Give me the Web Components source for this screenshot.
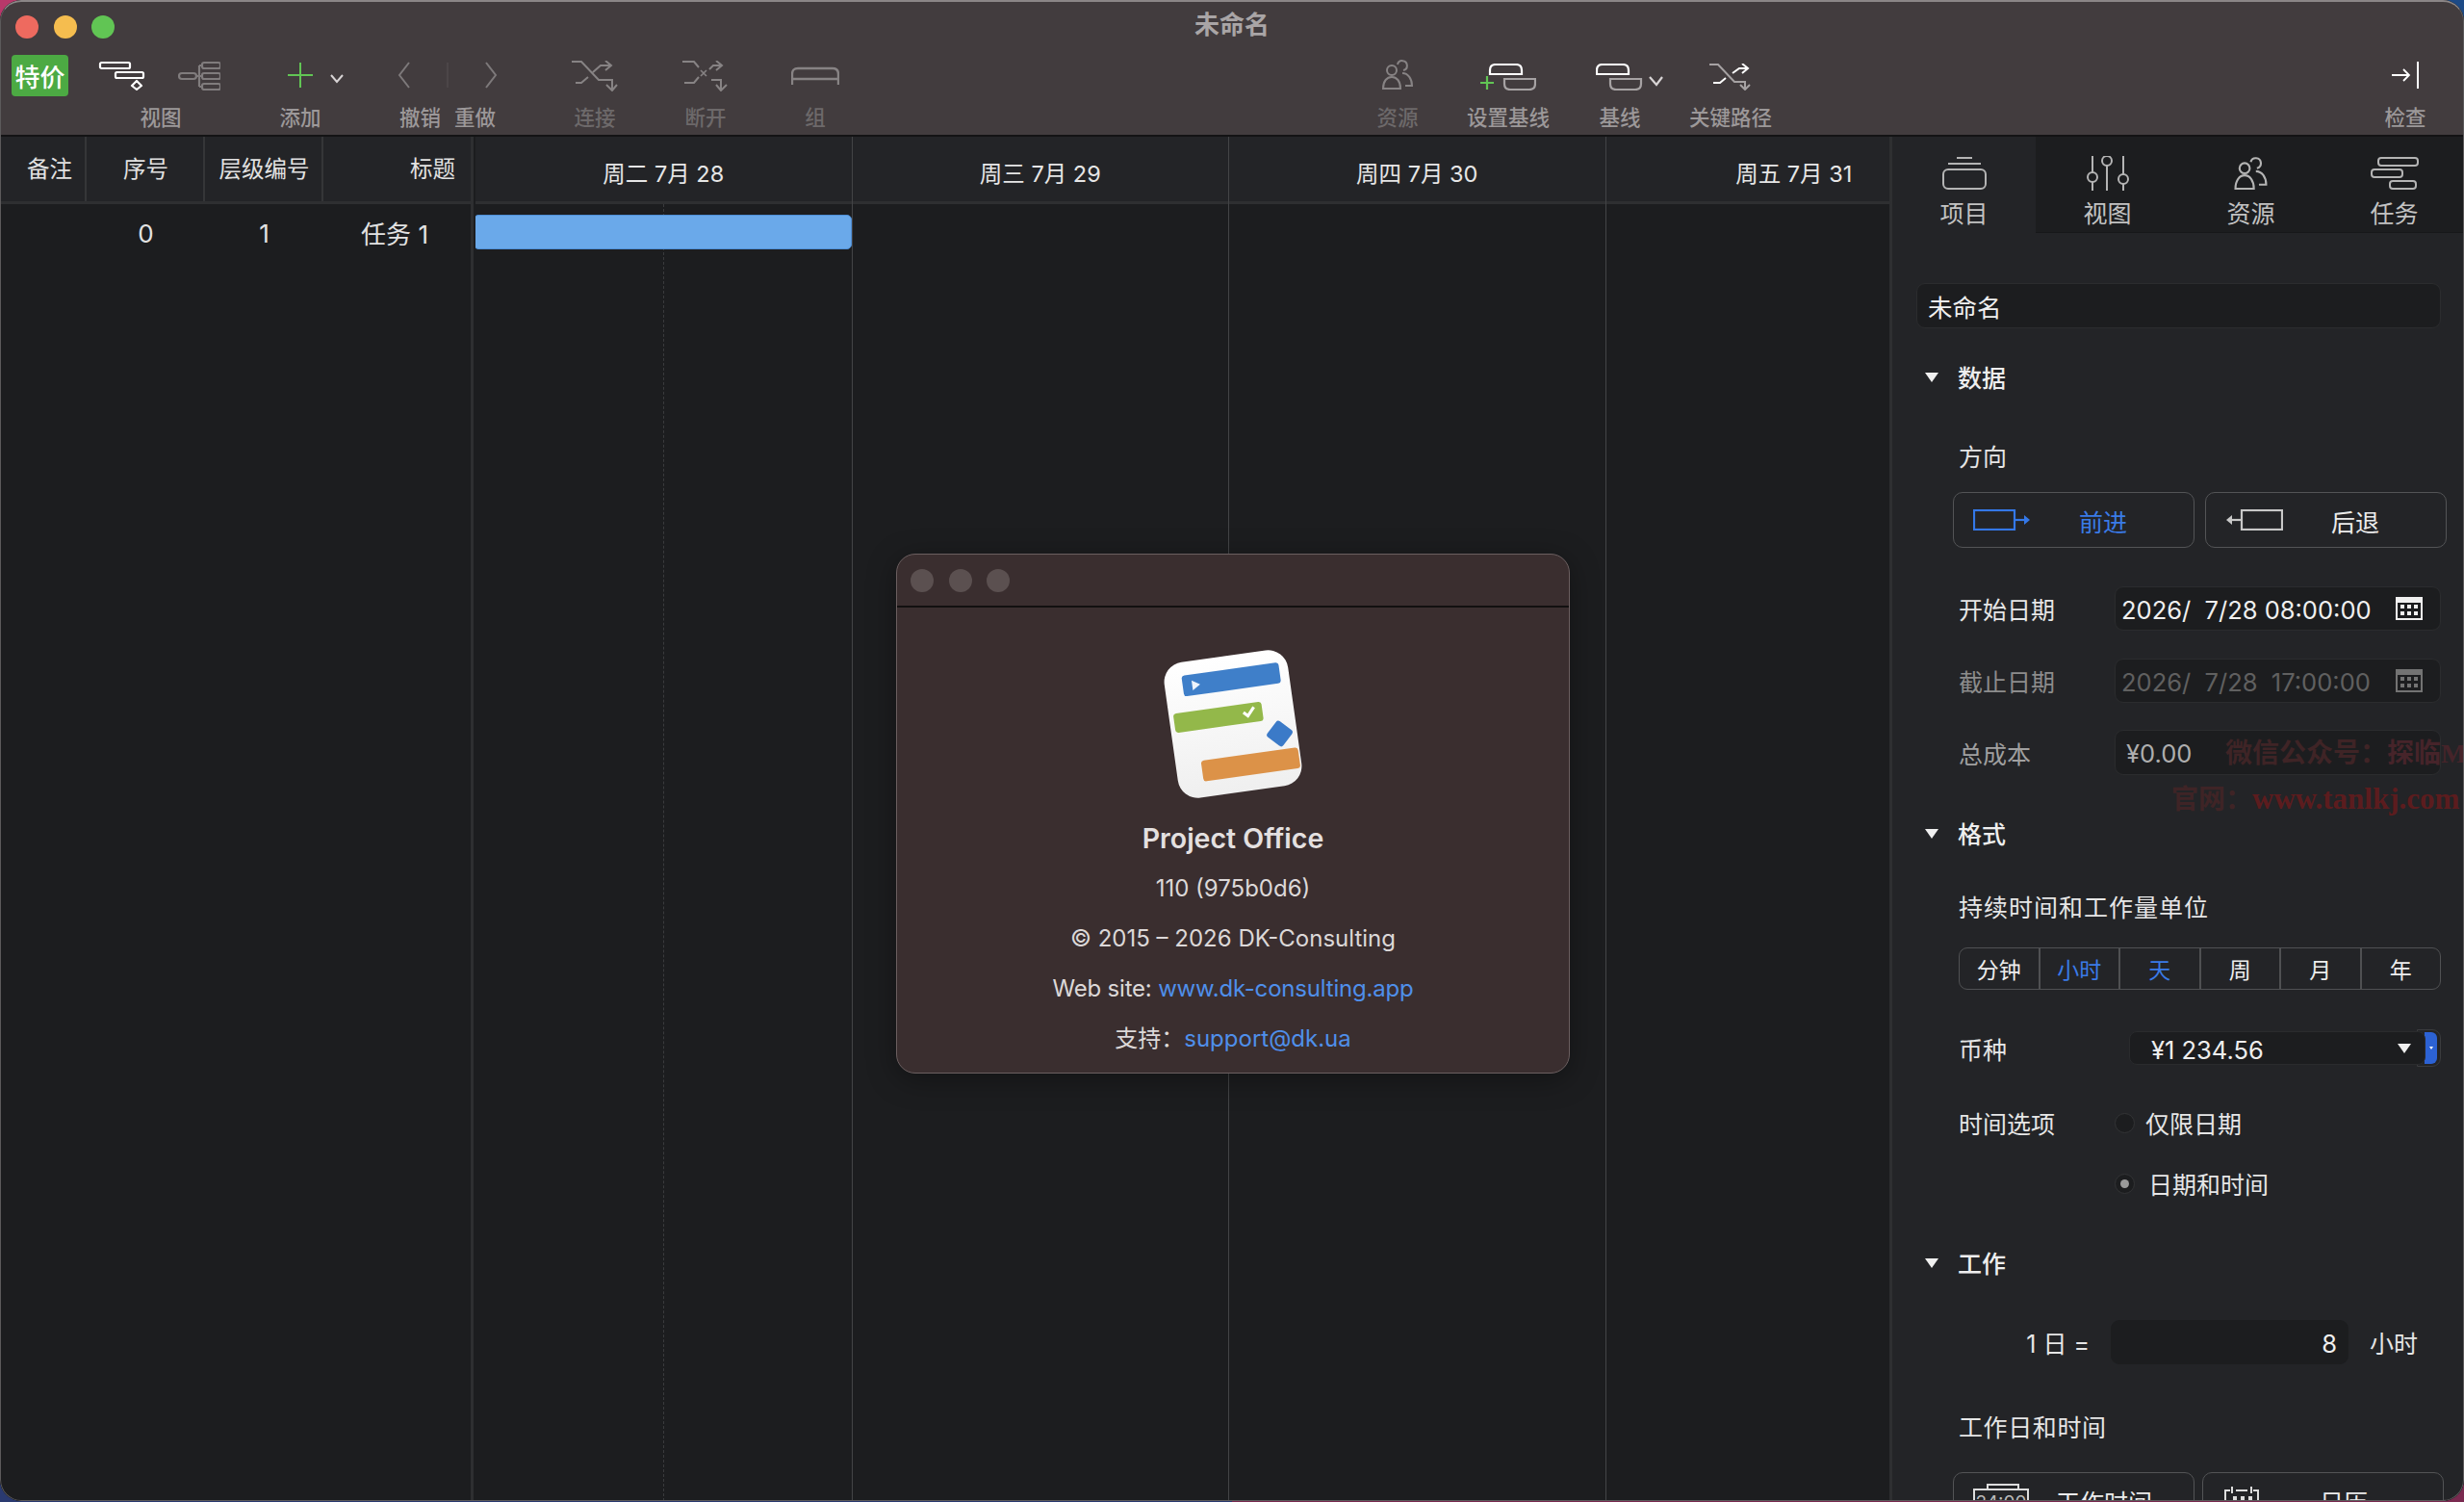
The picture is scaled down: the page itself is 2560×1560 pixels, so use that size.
<!DOCTYPE html>
<html lang="zh-CN">
<head>
<meta charset="utf-8">
<title>未命名</title>
<style>
html,body{margin:0;padding:0;height:1560px;overflow:hidden}
body{background:conic-gradient(#1d4a86 0 90deg,#7a2a50 90deg 180deg,#2a3a70 180deg 270deg,#b8386a 270deg 360deg);font-family:Inter,"Noto Sans CJK SC",sans-serif;}
</style>
</head>
<body>
<x-window>
  <x-titlebar>未命名</x-titlebar>
  <x-toolbar>
    <x-badge style="margin-left:12px">特价</x-badge>
    <x-tool style="width:130px;margin-left:31px">
      <svg style="margin-left:-4px" width="127" height="31" viewBox="0 0 127 31" fill="none" stroke-width="2.2" stroke-linejoin="round">
        <g stroke="#fff"><rect x="2" y="2" width="31" height="6" rx="1.5"/><rect x="18" y="12" width="29" height="6" rx="1.5"/><path d="M40 21l5 5-5 4-5-4z"/></g>
        <g stroke="#807c7d"><rect x="84" y="13" width="18" height="6" rx="3"/><rect x="108" y="2" width="19" height="6" rx="2"/><rect x="108" y="13" width="19" height="6" rx="2"/><rect x="108" y="24" width="19" height="6" rx="2"/><path d="M102 16h6M105 5v22M105 5h3M105 27h3"/></g>
      </svg>
      <span slot="label">视图</span>
    </x-tool>
    <x-tool style="width:100px;margin-left:30px">
      <svg style="margin-left:34px" width="62" height="30" viewBox="0 0 62 30" fill="none" stroke-width="2"><path d="M14 2v26M1 15h26" stroke="#61c554"/><path d="M46 15l6 7 6-7" stroke="#d8d4d5"/></svg>
      <span slot="label">添加</span>
    </x-tool>
    <x-tool style="width:116px;margin-left:45px">
      <svg width="104" height="32" viewBox="0 0 104 32" fill="none" stroke-width="2"><path d="M12 3L2 16l10 13" stroke="#7d797a"/><path d="M52 3v26" stroke="#565153" stroke-width="1"/><path d="M92 3l10 13-10 13" stroke="#7d797a"/></svg>
      <span slot="label" style="display:flex;gap:14px"><span>撤销</span><span>重做</span></span>
    </x-tool>
    <x-tool dim style="width:80px;margin-left:55px">
      <svg style="margin-top:2px" width="48" height="32" viewBox="0 0 48 32" fill="none" stroke="#878384" stroke-width="2"><path d="M0 1h10l18 19h14v10M36 25l6 6 5-6M4 23h6l7-6M22 12l8-7h10M35 0l6 5-6 5"/></svg>
      <span slot="label">连接</span>
    </x-tool>
    <x-tool dim style="width:80px;margin-left:35px">
      <svg style="margin-top:2px" width="48" height="32" viewBox="0 0 48 32" fill="none" stroke="#878384" stroke-width="2"><path d="M0 1h12l5 6M2 23h10l5-6M28 9l4-4h8M35 0l6 5-6 5M30 20h10v10M35 25l5 6 6-6"/><path d="M19 10l6 6m0-6l-6 6" stroke-width="1.6"/></svg>
      <span slot="label">断开</span>
    </x-tool>
    <x-tool dim style="width:80px;margin-left:34px">
      <svg style="margin-top:1px" width="50" height="20" viewBox="0 0 50 20" fill="none" stroke="#878384" stroke-width="2.4"><path d="M1 19V8Q1 2 7 2h36q6 0 6 6v11M1 13h48"/></svg>
      <span slot="label">组</span>
    </x-tool>
    <x-tool dim style="width:80px;margin-left:525px">
      <svg width="33" height="32" viewBox="0 0 33 32" fill="none" stroke="#878384" stroke-width="2"><circle cx="10" cy="11" r="5"/><path d="M1 30c0-8 4-12 9-12s9 4 9 12z"/><path d="M16 5a5 5 0 1 1 6 6"/><path d="M21 14c6 0 10 6 10 13h-7"/></svg>
      <span slot="label">资源</span>
    </x-tool>
    <x-tool style="width:100px;margin-left:25px">
      <svg style="margin-top:3px" width="58" height="28" viewBox="0 0 58 28" fill="none" stroke-width="2.2"><path d="M10 11V7q0-6 6-6h21q6 0 6 6v4z" stroke="#fff"/><path d="M25 16v5q0 6 6 6h20q6 0 6-6v-5z" stroke="#a6a2a3"/><path d="M7 13v14M0 20h14" stroke="#61c554"/></svg>
      <span slot="label">设置基线</span>
    </x-tool>
    <x-tool style="width:80px;margin-left:26px">
      <svg style="margin-left:20px;margin-top:3px" width="70" height="28" viewBox="0 0 70 28" fill="none" stroke-width="2.2"><path d="M1 11V7q0-6 6-6h21q6 0 6 6v4z" stroke="#fff"/><path d="M15 16v5q0 6 6 6h20q6 0 6-6v-5z" stroke="#a6a2a3"/><path d="M56 14l7 8 6-8" stroke="#d8d4d5"/></svg>
      <span slot="label">基线</span>
    </x-tool>
    <x-tool style="width:100px;margin-left:25px">
      <svg style="margin-top:3px" width="44" height="28" viewBox="0 0 44 28" fill="none" stroke-width="2"><path d="M0 1h9l17 18h11v8M32 22l5 5 5-5" stroke="#a6a2a3"/><path d="M4 20h7l6-5M24 10l7-5h8M34 0l6 5-6 5" stroke="#fff"/></svg>
      <span slot="label">关键路径</span>
    </x-tool>
    <x-tool style="width:80px;margin-left:611px">
      <svg width="30" height="30" viewBox="0 0 30 30" fill="none" stroke="#fff" stroke-width="2"><path d="M28 1v28"/><path d="M1 15h17M13 9l6 6-6 6" stroke-width="1.8"/></svg>
      <span slot="label">检查</span>
    </x-tool>
  </x-toolbar>
  <x-main>
    <x-gantt>
      <x-table>
        <x-th style="width:90px;padding-left:15px">备注</x-th>
        <x-th style="width:123px;padding-left:2px">序号</x-th>
        <x-th style="width:123px;padding-left:2px">层级编号</x-th>
        <x-th last style="width:153px;justify-content:flex-end;padding-right:16px">标题</x-th>
        <x-td slot="row" style="width:90px"></x-td>
        <x-td slot="row" style="width:123px">0</x-td>
        <x-td slot="row" style="width:123px">1</x-td>
        <x-td slot="row" style="width:153px;justify-content:flex-end;padding-right:44px;padding-bottom:2px">任务 1</x-td>
      </x-table>
      <x-timeline>
        <x-day>周二 7月 28<x-dash slot="bar"></x-dash><x-bar slot="bar"></x-bar></x-day>
        <x-day>周三 7月 29</x-day>
        <x-day>周四 7月 30</x-day>
        <x-day>周五 7月 31</x-day>
      </x-timeline>
    </x-gantt>
    <x-inspector>
      <x-tabs>
        <x-tab active>
          <svg width="46" height="34" viewBox="0 0 46 34" fill="none" stroke="#b4b4b4" stroke-width="2"><path d="M15 1h16M6 7h34"/><rect x="1" y="13" width="44" height="20" rx="5"/></svg>
          <span slot="label">项目</span>
        </x-tab>
        <x-tab>
          <svg width="44" height="36" viewBox="0 0 44 36" fill="none" stroke="#b4b4b4" stroke-width="2"><path d="M6 0v17M6 27v9M21 10v26M38 0v19M38 29v7"/><circle cx="6" cy="22" r="5"/><circle cx="21" cy="5" r="5"/><circle cx="38" cy="24" r="5"/></svg>
          <span slot="label">视图</span>
        </x-tab>
        <x-tab>
          <svg width="36" height="34" viewBox="0 0 33 32" fill="none" stroke="#b4b4b4" stroke-width="2"><circle cx="10" cy="11" r="5"/><path d="M1 31c0-8 4-13 9-13s9 5 9 13z"/><path d="M16 5a5 5 0 1 1 6 6"/><path d="M21 14c6 0 10 6 10 13h-7"/></svg>
          <span slot="label">资源</span>
        </x-tab>
        <x-tab>
          <svg width="50" height="34" viewBox="0 0 50 34" fill="none" stroke="#b4b4b4" stroke-width="2"><rect x="8" y="1" width="41" height="8" rx="3"/><rect x="1" y="13" width="32" height="8" rx="3"/><rect x="20" y="25" width="27" height="8" rx="3"/></svg>
          <span slot="label">任务</span>
        </x-tab>
      </x-tabs>
      <x-field style="margin:52px 0 0 25px;width:545px;height:47px;padding:0 0 0 11px">未命名</x-field>

      <x-section style="margin-top:35px">数据</x-section>
      <x-label style="margin-top:54px">方向</x-label>
      <x-pair style="margin-top:21px;--gap:11px">
        <x-btn active>
          <svg width="60" height="22" viewBox="0 0 60 22" fill="none" stroke="#3478e8" stroke-width="2.2"><rect x="1" y="1" width="42" height="20"/><path d="M43 11h11" /><path d="M53 6l6 5-6 5z" fill="#3478e8" stroke="none"/></svg>
          <span slot="text">前进</span>
        </x-btn>
        <x-btn>
          <svg width="60" height="22" viewBox="0 0 60 22" fill="none" stroke="#c8c8c8" stroke-width="2.2"><rect x="17" y="1" width="42" height="20"/><path d="M6 11h11"/><path d="M7 6l-6 5 6 5z" fill="#c8c8c8" stroke="none"/></svg>
          <span slot="text">后退</span>
        </x-btn>
      </x-pair>
      <x-row style="margin-top:40px"><span slot="label">开始日期</span>
        <x-field>2026/  7/28 08:00:00<x-cal slot="end"></x-cal></x-field>
      </x-row>
      <x-row dim style="margin-top:29px"><span slot="label">截止日期</span>
        <x-field disabled>2026/  7/28  17:00:00<x-cal slot="end" style="--c:#737373"></x-cal></x-field>
      </x-row>
      <x-row muted style="margin-top:28px"><span slot="label">总成本</span>
        <x-field style="padding-left:11px;color:#aeaeae;height:47px">¥0.00</x-field>
      </x-row>

      <x-section style="margin-top:45px">格式</x-section>
      <x-label style="margin-top:48px;letter-spacing:1px">持续时间和工作量单位</x-label>
      <x-seg style="margin-top:26px">
        <x-seg-item>分钟</x-seg-item><x-seg-item on>小时</x-seg-item><x-seg-item on>天</x-seg-item><x-seg-item>周</x-seg-item><x-seg-item>月</x-seg-item><x-seg-item last>年</x-seg-item>
      </x-seg>
      <x-row style="margin-top:41px;height:39px"><span slot="label">币种</span>
        <x-select>¥1 234.56</x-select>
      </x-row>
      <x-row style="margin-top:40px;height:30px"><span slot="label">时间选项</span>
        <x-radio style="--pad:11px">仅限日期</x-radio>
      </x-row>
      <x-row style="margin-top:33px;height:30px"><span slot="label"></span>
        <x-radio checked style="--pad:14px">日期和时间</x-radio>
      </x-row>

      <x-section style="margin-top:55px">工作</x-section>
      <x-workday style="margin-top:45px">
        <span slot="before">1 日 =</span>
        <x-field right style="width:247px;padding-right:11px;border-color:transparent">8</x-field>
        <span slot="after">小时</span>
      </x-workday>
      <x-label style="margin-top:51px;letter-spacing:.6px">工作日和时间</x-label>
      <x-pair style="margin-top:31px;--gap:8px">
        <x-btn style="--tx:28px">
          <x-clock>24:00</x-clock>
          <span slot="text">工作时间</span>
        </x-btn>
        <x-btn style="--il:22px;--tx:63px">
          <svg width="36" height="30" viewBox="0 0 36 30" fill="none" stroke="#ddd" stroke-width="2"><path d="M1 30V5h5M12 5h12M30 5h5v25"/><path d="M8 1v7M28 1v7"/><path d="M9 13h4M17 13h4M25 13h4" stroke-width="4"/></svg>
          <span slot="text">日历</span>
        </x-btn>
      </x-pair>
    </x-inspector>
  </x-main>
  <x-about></x-about>
  <x-watermark></x-watermark>
</x-window>

<script>
const def=(name,html)=>customElements.define(name,class extends HTMLElement{
  constructor(){super();this.attachShadow({mode:'open'}).innerHTML=html;}
});
const FONT='font-family:Inter,"Noto Sans CJK SC",sans-serif;';

def('x-window',`<style>
:host{display:flex;flex-direction:column;position:relative;width:2560px;height:1559px;border-radius:22px;overflow:hidden;background:#1c1d1f;color:#e6e6e6;${FONT}}
.edge{position:absolute;inset:0;border-radius:22px;border:1.5px solid #5c5a5b;border-top:2px solid #8b8687;pointer-events:none;z-index:9}
</style><slot></slot><div class="edge"></div>`);

def('x-titlebar',`<style>
:host{display:grid;grid-template-columns:1fr auto 1fr;height:48px;background:#423c3e;box-sizing:border-box;padding:14px 0 0 0;color:#a9a5a6;font-size:26px;font-weight:600;line-height:24px}
.lights{display:flex;gap:15.5px;margin:2px 0 0 16px}
i{width:24px;height:24px;border-radius:50%;display:block}
</style><div class="lights"><i style="background:#ee6a5f"></i><i style="background:#f5bd4f"></i><i style="background:#61c554"></i></div><div><slot></slot></div><div></div>`);

def('x-toolbar',`<style>
:host{display:flex;align-items:flex-start;height:94px;box-sizing:border-box;background:#423c3e;border-bottom:2px solid #131314}
</style><slot></slot>`);

def('x-badge',`<style>
:host{display:flex;align-items:center;justify-content:center;flex:none;width:59px;height:43px;margin-top:9px;border-radius:4px;background:#4caa43;color:#fff;font-size:26px;font-weight:500;white-space:nowrap}
</style><slot></slot>`);

def('x-tool',`<style>
:host{display:flex;flex-direction:column;align-items:center;flex:none;color:#9c9899;font-size:21.5px;font-weight:500}
:host([dim]){color:#6d696a}
.i{height:60px;display:flex;align-items:center;justify-content:center}
.l{height:28px;line-height:28px;white-space:nowrap}
::slotted(svg){display:block}
</style><div class="i"><slot></slot></div><div class="l"><slot name="label"></slot></div>`);

def('x-main',`<style>
:host{display:flex;flex:1;min-height:0}
</style><slot></slot>`);

def('x-gantt',`<style>
:host{display:flex;width:1963px;flex:none;overflow:hidden;background:#1c1d1f}
</style><slot></slot>`);

def('x-table',`<style>
:host{display:flex;flex-direction:column;flex:none;width:492px;box-sizing:border-box;border-right:3px solid #2e2f31}
.h{display:flex;height:70px;flex:none;background:#232427;border-bottom:3px solid #2e2f31;box-sizing:border-box}
.r{display:flex;height:60px}
</style><div class="h"><slot></slot></div><div class="r"><slot name="row"></slot></div>`);

def('x-th',`<style>
:host{display:flex;align-items:center;justify-content:center;box-sizing:border-box;border-right:2px solid #353638;color:#e2e2e2;font-size:23.5px;padding-bottom:3px;white-space:nowrap;flex:none}
:host([last]){border-right:0}
</style><slot></slot>`);

def('x-td',`<style>
:host{display:flex;align-items:center;justify-content:center;box-sizing:border-box;color:#e2e2e2;font-size:26px;flex:none;white-space:nowrap}
</style><slot></slot>`);

def('x-timeline',`<style>
:host{display:grid;grid-template-columns:repeat(4,391.5px);flex:none;margin-left:2px;overflow:hidden}
</style><slot></slot>`);

def('x-day',`<style>
:host{display:flex;flex-direction:column;position:relative;box-sizing:border-box;border-right:1px solid #434446}
.h{height:70px;box-sizing:border-box;background:#232427;border-bottom:3px solid #2e2f31;display:flex;align-items:center;justify-content:center;font-size:23.5px;color:#e6e6e6;white-space:nowrap;padding-top:6px}
.b{flex:1;padding-top:11px}
</style><div class="h"><slot></slot></div><div class="b"><slot name="bar"></slot></div>`);

def('x-bar',`<style>
:host{display:block;position:relative;z-index:1;height:36px;margin:0 0 0 -2px;box-sizing:border-box;background:#6aa9ea;border:1.5px solid #4f90d8;border-radius:5px}
</style>`);

def('x-dash',`<style>
:host{display:block;position:absolute;left:195px;top:70px;bottom:0;width:0;border-left:1px dashed #3a3b3d}
</style>`);

def('x-inspector',`<style>
:host{display:block;position:relative;flex:1;min-width:0;box-sizing:border-box;background:#232427;border-left:3px solid #2e2f31;overflow:hidden;color:#e6e6e6;font-size:25px}
</style><slot></slot>`);

def('x-tabs',`<style>
:host{display:flex;height:100px;background:#1c1d1f;box-sizing:border-box;border-bottom:1px solid #17181a}
</style><slot></slot>`);

def('x-tab',`<style>
:host{display:flex;flex-direction:column;align-items:center;flex:none;width:149px;color:#c2c2c2;font-size:25px;box-sizing:border-box}
:host([active]){background:#232427;height:101px}
.i{height:62px;display:flex;align-items:center;justify-content:center;padding-top:14px;box-sizing:border-box}
.l{line-height:32px;margin-top:2px}
::slotted(svg){display:block}
</style><div class="i"><slot></slot></div><div class="l"><slot name="label"></slot></div>`);

def('x-field',`<style>
:host{display:flex;align-items:center;box-sizing:border-box;height:46px;background:#1c1d1f;border:1.5px solid #2b2c2e;border-radius:9px;padding:2px 18px 0 6px;font-size:25.5px;color:#f0f0f0;white-space:pre}
:host([disabled]){color:#606060}
:host([right]){justify-content:flex-end}
.end{margin-left:auto;display:flex;margin-top:-2px}
:host([right]) .end{display:none}
</style><slot></slot><span class="end"><slot name="end"></slot></span>`);

def('x-cal',`<style>
:host{display:block;width:28px;height:24px;box-sizing:border-box;border:2px solid var(--c,#f0f0f0);border-top-width:6px;position:relative}
i{position:absolute;width:4px;height:4px;background:var(--c,#f0f0f0)}
</style><i style="left:3px;top:2px"></i><i style="left:10px;top:2px"></i><i style="left:17px;top:2px"></i><i style="left:3px;top:9px"></i><i style="left:10px;top:9px"></i><i style="left:17px;top:9px"></i>`);

def('x-section',`<style>
:host{display:flex;align-items:center;height:30px;margin-left:34px;font-size:25px;font-weight:500;color:#eee}
.t{width:0;height:0;border-left:7.5px solid transparent;border-right:7.5px solid transparent;border-top:10px solid #f0f0f0;margin-right:20px;flex:none;transform:translateY(1px)}
</style><span class="t"></span><slot></slot>`);

def('x-label',`<style>
:host{display:block;height:30px;line-height:30px;margin-left:69px;font-size:25px;color:#e6e6e6;white-space:nowrap}
</style><slot></slot>`);

def('x-pair',`<style>
:host{display:flex;gap:var(--gap,11px);margin-left:63px}
</style><slot></slot>`);

def('x-btn',`<style>
:host{display:flex;align-items:center;box-sizing:border-box;width:251px;height:58px;flex:none;border:1.5px solid #535456;border-radius:10px;color:#ececec;font-size:25px;white-space:nowrap;padding-left:var(--il,20px)}
:host([active]){color:#3a7be8}
.t{margin-left:var(--tx,50px);line-height:30px;padding-top:5px}
::slotted(svg){display:block;flex:none}
</style><slot></slot><span class="t"><slot name="text"></slot></span>`);

def('x-clock',`<style>
:host{display:block;position:relative;width:58px;height:30px;margin-top:5px;box-sizing:border-box;border:2px solid #ddd;flex:none;font-size:19px;line-height:26px;text-align:center;color:#bbb;overflow:visible}
:host::before{content:"";position:absolute;left:12px;top:-7px;width:30px;border:2px solid #ddd;border-bottom:0;box-sizing:content-box;height:3px}
</style><slot></slot>`);

def('x-row',`<style>
:host{display:grid;grid-template-columns:162px 339px;align-items:center;margin-left:69px;font-size:25px;color:#e6e6e6}
:host([dim]){color:#8c8c8c}
:host([muted]){color:#a0a0a0}
.l{white-space:nowrap}
</style><div class="l"><slot name="label"></slot></div><div style="display:contents"><slot></slot></div>`);

def('x-seg',`<style>
:host{display:flex;box-sizing:border-box;width:501px;height:44px;margin-left:69px;border:1.5px solid #505153;border-radius:9px;overflow:hidden}
</style><slot></slot>`);

def('x-seg-item',`<style>
:host{display:flex;align-items:center;justify-content:center;flex:1;box-sizing:border-box;border-right:2px solid #4f5052;font-size:23px;color:#ededed}
:host([on]){color:#3a7be8}
:host([last]){border-right:0}
</style><slot></slot>`);

def('x-select',`<style>
:host{display:flex;align-items:center;height:39px;width:324px;margin-left:15px;position:relative;font-size:25.5px;color:#eee}
.s{position:relative;z-index:1;display:flex;align-items:center;box-sizing:border-box;width:308px;height:35px;background:#1c1d1f;border:1.5px solid #2a2b2d;border-radius:8px;padding-left:22px;line-height:35px}
.tx{padding-top:4px}
.a{margin-left:auto;margin-right:14px;width:0;height:0;border-left:7.5px solid transparent;border-right:7.5px solid transparent;border-top:10px solid #f0f0f0}
.st{display:flex;align-items:center;justify-content:flex-end;box-sizing:border-box;width:25px;height:39px;margin-left:-9px;border:1.5px solid #3a3b3d;border-radius:0 9px 9px 0;padding-right:3px}
.st i{display:flex;align-items:center;justify-content:center;width:13px;height:33px;background:#2c62d4;border-radius:0 6px 6px 0;color:#fff}
.st b{width:0;height:0;border-left:2.5px solid transparent;border-right:2.5px solid transparent;border-top:3px solid #fff}
</style><div class="s"><span class="tx"><slot></slot></span><span class="a"></span></div><div class="st"><i><b></b></i></div>`);

def('x-radio',`<style>
:host{display:flex;align-items:center;font-size:25px;color:#e6e6e6;white-space:nowrap}
.r{display:flex;align-items:center;justify-content:center;width:21px;height:21px;box-sizing:border-box;border-radius:50%;background:#1c1d1f;border:1.5px solid #333436;flex:none;margin-right:var(--pad,11px)}
:host([checked]) .r::after{content:"";width:9px;height:9px;border-radius:50%;background:#9a9a9a}
</style><span class="r"></span><slot></slot>`);

def('x-workday',`<style>
:host{display:flex;align-items:center;margin-left:69px;font-size:25px;color:#e6e6e6;white-space:pre}
.b{display:block;width:136px;box-sizing:border-box;text-align:right;margin-right:22px}
.a{margin-left:22px}
</style><span class="b"><slot name="before"></slot></span><slot></slot><span class="a"><slot name="after"></slot></span>`);

def('x-about',`<style>
:host{display:flex;flex-direction:column;position:absolute;left:931px;top:575px;width:700px;height:540px;box-sizing:border-box;background:#3a2e2f;border:1.5px solid #6b5f60;border-radius:20px;overflow:hidden;color:#dcd8d8;font-size:24px;z-index:5;text-align:center;box-shadow:0 6px 30px rgba(0,0,0,.35)}
.tb{display:flex;gap:15.5px;align-items:center;height:55px;flex:none;padding-left:14px;box-sizing:border-box;border-bottom:2px solid #121010}
.tb i{width:24px;height:24px;border-radius:50%;background:#5b5050;display:block}
svg{display:block;margin:38px auto 10px;flex:none}
.ln{height:52px;line-height:52px;white-space:pre}
.n{font-size:28.5px;font-weight:600;color:#e4e0e0}
.w{letter-spacing:-.2px}
a{color:#4f8fea;text-decoration:none}
</style>
<div class="tb"><i></i><i></i><i></i></div>
<svg width="166" height="166" viewBox="0 0 160 160">
<defs><linearGradient id="g" x1="0" y1="0" x2="0" y2="1"><stop offset="0" stop-color="#fff"/><stop offset="1" stop-color="#efefef"/></linearGradient></defs>
<g transform="rotate(-8 80 80)">
<rect x="17.5" y="11.5" width="125" height="137" rx="20" fill="url(#g)"/>
<rect x="35.5" y="25" width="98" height="21" rx="3" fill="#3f7fc9"/>
<path d="M45 31l8 5-8 5z" fill="#eef4fb"/>
<rect x="22" y="61.5" width="89" height="19.5" rx="3" fill="#93b84a"/>
<path d="M92 70l4 4 7-8" fill="none" stroke="#fff" stroke-width="3"/>
<rect x="115" y="86" width="20" height="20" rx="3" fill="#3b7ac8" transform="rotate(45 125 96)"/>
<rect x="43" y="112" width="98" height="21" rx="3" fill="#dc9248"/>
</g></svg>
<div class="ln n">Project Office</div>
<div class="ln">110 (975b0d6)</div>
<div class="ln">© 2015 – 2026 DK-Consulting</div>
<div class="ln w">Web site: <a>www.dk-consulting.app</a></div>
<div class="ln">支持：<a>support@dk.ua</a></div>`);

def('x-watermark',`<style>
:host{position:absolute;left:2256px;top:763px;width:304px;overflow:hidden;display:block;font-family:"Liberation Serif","Noto Sans CJK SC",serif;font-size:28px;font-weight:700;line-height:40px;white-space:nowrap;z-index:4;pointer-events:none}
div{height:47px;line-height:40px}
.a{color:#3f2426}.b{color:#46242a}.c{color:#5c1c1e;font-size:31px}
</style><div style="padding-left:56px"><span class="a">微信公众号：</span><span class="b">探临Mac</span></div><div><span class="a">官网：</span><span class="c">www.tanlkj.com</span></div>`);
</script>
</body>
</html>
